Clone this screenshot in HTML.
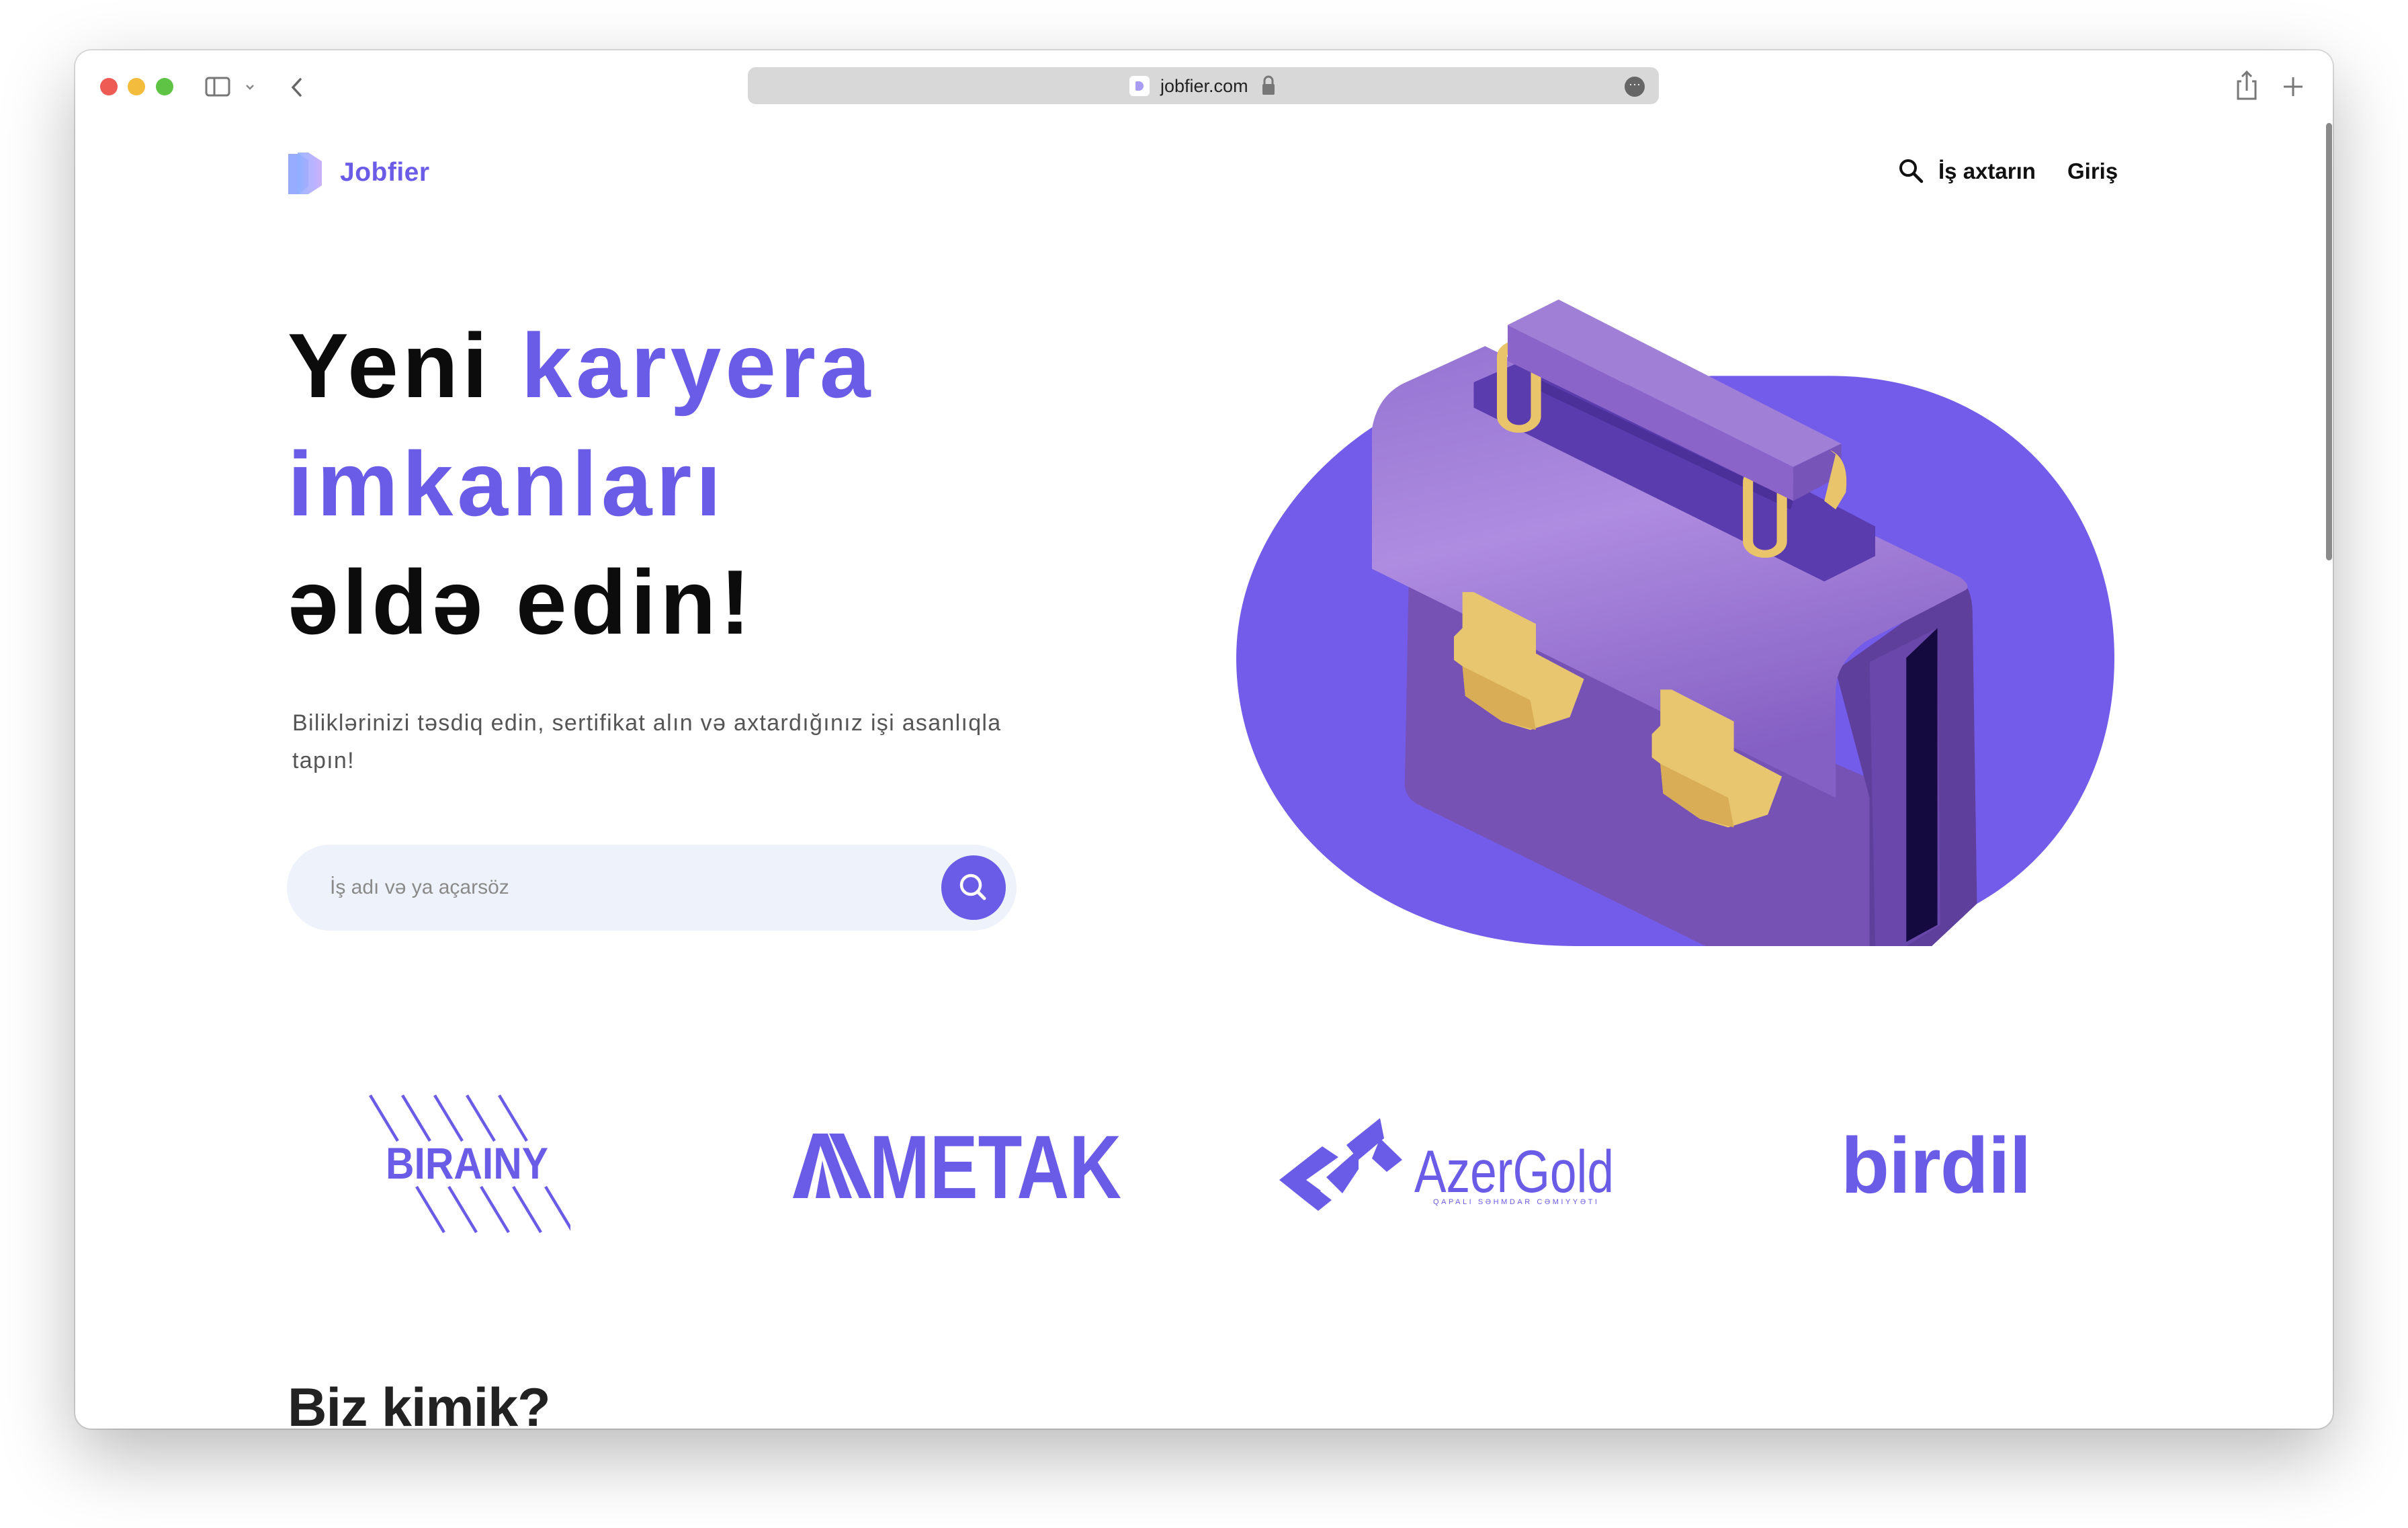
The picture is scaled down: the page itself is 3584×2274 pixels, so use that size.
<!DOCTYPE html>
<html><head><meta charset="utf-8"><style>
*{margin:0;padding:0;box-sizing:border-box}
body{width:3584px;height:2274px;background:#fff;position:relative;overflow:hidden;font-family:"Liberation Sans",sans-serif}
.win{position:absolute;left:112px;top:75px;width:3360px;height:2051px;background:#fff;border-radius:24px;overflow:hidden;box-shadow:0 0 0 2px rgba(0,0,0,.12),0 40px 110px rgba(0,0,0,.28)}
.abs{position:absolute}
.dot{position:absolute;top:41px;width:26px;height:26px;border-radius:50%}
.h{position:absolute;left:316px;font-weight:bold;font-size:136px;line-height:176px;color:#0c0c0c;letter-spacing:6px;white-space:nowrap}
.p{color:#6b5ce7}
</style></head><body>
<div class="win">
  <div class="dot" style="left:37px;background:#ee5b55"></div>
  <div class="dot" style="left:78px;background:#f4bc3c"></div>
  <div class="dot" style="left:120px;background:#5fc445"></div>
  <svg class="abs" style="left:193px;top:35px" width="150" height="40" viewBox="0 0 150 40"><rect x="2" y="6" width="34" height="26" rx="4" fill="none" stroke="#777" stroke-width="3"/><line x1="14" y1="6" x2="14" y2="32" stroke="#777" stroke-width="3"/><path d="M62 17l5 5 5-5" fill="none" stroke="#888" stroke-width="2.5"/><path d="M142 8l-11 12 11 12" fill="none" stroke="#666" stroke-width="3.5" stroke-linecap="round"/></svg>
  <div class="abs" style="left:1001px;top:25px;width:1356px;height:55px;background:#d8d8d8;border-radius:12px"></div>
  <div class="abs" style="left:1569px;top:38px;width:30px;height:30px;background:#fff;border-radius:6px"><div style="margin:8px 0 0 9px;width:12px;height:14px;background:#a99cf5;border-radius:2px 7px 7px 2px"></div></div>
  <div class="abs" style="left:1615px;top:35px;font-size:27px;color:#222;line-height:36px">jobfier.com</div>
  <svg class="abs" style="left:1764px;top:36px" width="24" height="34" viewBox="0 0 24 34"><path d="M6 14V9a6 6 0 0 1 12 0v5" fill="none" stroke="#777" stroke-width="3"/><rect x="3" y="14" width="18" height="16" rx="2" fill="#777"/></svg>
  <div class="abs" style="left:2306px;top:39px;width:30px;height:30px;border-radius:50%;background:#666;color:#fff;font-size:18px;text-align:center;line-height:22px">···</div>
  <svg class="abs" style="left:3210px;top:28px" width="110" height="50" viewBox="0 0 110 50"><path d="M14 18H9v26h26V18h-5M22 32V4M15 11l7-7 7 7" fill="none" stroke="#777" stroke-width="3"/><path d="M91 12v28M77 26h28" stroke="#777" stroke-width="3"/></svg>
  <div class="abs" style="left:3350px;top:108px;width:9px;height:651px;background:#8a8a8a;border-radius:5px"></div>

  <svg class="abs" style="left:313px;top:148px" width="74" height="70" viewBox="0 0 74 70"><defs><linearGradient id="lg" x1="0" x2="1"><stop offset="0" stop-color="#8fb0ff"/><stop offset="1" stop-color="#c6a8ff"/></linearGradient></defs><path d="M4 6h16l14 10v38l-14 12H4z" fill="#98acff"/><path d="M18 4h16l20 13v36L34 66H18z" fill="url(#lg)" opacity=".9"/></svg>
  <div class="abs" style="left:394px;top:158px;font-size:39px;font-weight:bold;color:#6b5ce7;line-height:48px;letter-spacing:.5px">Jobfier</div>
  <svg class="abs" style="left:2713px;top:160px" width="40" height="40" viewBox="0 0 40 40"><circle cx="15" cy="15" r="11" fill="none" stroke="#111" stroke-width="4"/><path d="M23 23l12 12" stroke="#111" stroke-width="4.5" stroke-linecap="round"/></svg>
  <div class="abs" style="left:2773px;top:158px;font-size:33px;color:#111;font-weight:bold;line-height:44px">İş axtarın</div>
  <div class="abs" style="left:2965px;top:158px;font-size:33px;color:#111;font-weight:bold;line-height:44px">Giriş</div>

  <div class="h" style="top:381px">Yeni <span class="p">karyera</span></div>
  <div class="h p" style="top:557px">imkanları</div>
  <div class="h" style="top:733px">əldə edin!</div>
  <div class="abs" style="left:323px;top:973px;width:1080px;font-size:34px;line-height:56px;color:#555;letter-spacing:1.3px">Biliklərinizi təsdiq edin, sertifikat alın və axtardığınız işi asanlıqla tapın!</div>
  <div class="abs" style="left:315px;top:1182px;width:1086px;height:128px;border-radius:64px;background:#eef2fa"></div>
  <div class="abs" style="left:379px;top:1228px;font-size:30px;color:#8a8a8a;line-height:36px">İş adı və ya açarsöz</div>
  <div class="abs" style="left:1289px;top:1198px;width:96px;height:96px;border-radius:50%;background:#6b5ce7"></div>
  <svg class="abs" style="left:1309px;top:1218px" width="56" height="56" viewBox="0 0 56 56"><circle cx="24" cy="24" r="14" fill="none" stroke="#fff" stroke-width="4.5"/><path d="M34 34l10 10" stroke="#fff" stroke-width="5" stroke-linecap="round"/></svg>

  <svg class="abs" style="left:1728px;top:355px" width="1307" height="978" viewBox="0 0 1553 1550" preserveAspectRatio="none">
    <defs><linearGradient id="lid" x1="0" y1="0" x2="0.3" y2="1"><stop offset="0" stop-color="#9474d2"/><stop offset=".45" stop-color="#ae8ce0"/><stop offset="1" stop-color="#8560c4"/></linearGradient></defs>
    <path d="M1050 205C1350 205 1553 500 1553 870C1553 1250 1350 1550 1000 1550L600 1550C250 1550 0 1250 0 870C0 600 150 380 300 280L840 205Z" fill="#735ce9"/>
    <path d="M305 690L298 1170Q300 1200 320 1215L830 1550L1130 1550L1130 1160Z" fill="#7752b5"/>
    <path d="M1060 900L1280 690Q1300 700 1302 760L1310 1450L1230 1550L1120 1550L1120 1200Z" fill="#5f3f9c"/>
    <path d="M1120 880L1240 800L1245 1500L1185 1550L1130 1550Z" fill="#6a48ab"/>
    <path d="M1185 870L1240 800V1500L1185 1540Z" fill="#140a40"/>
    <path d="M240 660L240 330Q250 250 300 220L440 135L1280 680Q1300 700 1290 710L1115 830Q1060 880 1060 950L1060 1200Z" fill="url(#lid)"/>
    <path d="M420 220L540 150L1130 560L1130 630L1040 690L420 280Z" fill="#5a3cae"/>
    <path d="M520 230L980 520L985 500L530 210Z" fill="#4a3098"/>
    <rect x="470" y="130" width="60" height="200" rx="30" fill="none" stroke="#e9c46a" stroke-width="18"/>
    <rect x="905" y="425" width="60" height="200" rx="30" fill="none" stroke="#e9c46a" stroke-width="18"/>
    <path d="M480 85L570 25L1070 365L985 420Z" fill="#a07fd6"/>
    <path d="M480 85L985 420L985 500L480 170Z" fill="#8b64c9"/>
    <path d="M985 420L1070 365L1070 440L985 500Z" fill="#7654b8"/>
    <path d="M1050 380Q1085 400 1078 480L1060 520L1040 500L1060 390Z" fill="#e9c46a"/>
    <path d="M400 715L420 715L530 790L530 860L615 920L590 1010L520 1040L470 1020L405 960L400 890L385 875L385 820L400 800Z" fill="#e8c66f"/>
    <path d="M400 890L520 970L530 1040L470 1020L405 960Z" fill="#d9ad55"/>
    <path d="M750 945L770 945L880 1020L880 1090L965 1150L940 1240L870 1270L820 1250L755 1190L750 1120L735 1105L735 1050L750 1030Z" fill="#e8c66f"/>
    <path d="M750 1120L870 1200L880 1270L820 1250L755 1190Z" fill="#d9ad55"/>
  </svg>

  <svg class="abs" style="left:437px;top:1553px" width="300" height="210" viewBox="0 0 300 210">
    <g stroke="#6b5ce7" stroke-width="4.5"><path d="M2 2l41 68M50 2l41 68M98 2l41 68M146 2l41 68M194 2l41 68"/><path d="M71 138l41 68M119 138l41 68M167 138l41 68M215 138l41 68M263 138l41 68"/></g>
    <text x="25" y="126" font-family="Liberation Sans" font-weight="bold" font-size="66" fill="#6b5ce7" textLength="242" lengthAdjust="spacingAndGlyphs">BIRAINY</text>
  </svg>
  <svg class="abs" style="left:1068px;top:1612px" width="495" height="100" viewBox="0 0 495 100">
    <path d="M30 0L52 0L88 96L70 96L41 18L22 96L0 96Z" fill="#6b5ce7"/>
    <path d="M54 0L76 0L117 96L99 96Z" fill="#6b5ce7"/>
    <path d="M44 40L56 96L34 96Z" fill="#6b5ce7"/>
    <text x="114" y="96" font-family="Liberation Sans" font-weight="bold" font-size="134" fill="#6b5ce7" textLength="375" lengthAdjust="spacingAndGlyphs">METAK</text>
  </svg>
  <svg class="abs" style="left:1792px;top:1589px" width="500" height="140" viewBox="0 0 500 140">
    <path d="M0 92L64 42L88 58L40 92L62 108L40 124Z" fill="#6b5ce7"/>
    <path d="M40 124L60 108L78 122L58 138Z" fill="#6b5ce7"/>
    <path d="M70 88L118 46L118 76L94 112Z" fill="#6b5ce7"/>
    <path d="M100 40L150 0L156 30L118 62Z" fill="#6b5ce7"/>
    <path d="M150 30L183 62L160 80L138 60Z" fill="#6b5ce7"/>
    <text x="201" y="110" font-family="Liberation Sans" font-size="89" fill="#6b5ce7" textLength="297" lengthAdjust="spacingAndGlyphs">AzerGold</text>
    <text x="229" y="128" font-family="Liberation Sans" font-size="11" fill="#6b5ce7" textLength="244" lengthAdjust="spacing">QAPALI SƏHMDAR CƏMIYYƏTI</text>
  </svg>
  <div class="abs" style="left:2628px;top:1590px;font-size:118px;color:#6b5ce7;font-weight:bold;line-height:140px;letter-spacing:-1px">birdil</div>

  <div class="abs" style="left:316px;top:1970px;font-size:81px;font-weight:bold;color:#222;line-height:100px;letter-spacing:-1px">Biz kimik?</div>
</div>
</body></html>
